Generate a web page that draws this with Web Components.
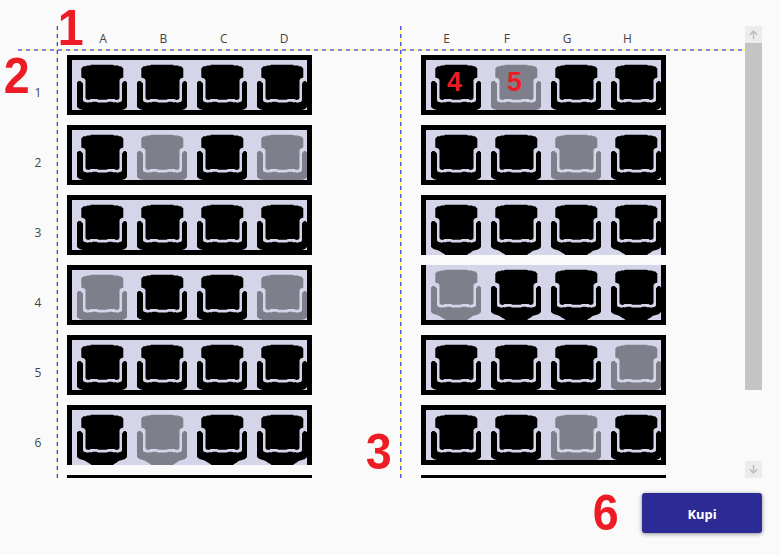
<!DOCTYPE html>
<html lang="hr">
<head>
<meta charset="utf-8">
<title>Odabir sjedala</title>
<style>
html,body{margin:0;background:#fafafa}
body{width:780px;height:555px;overflow:hidden;font-family:"Open Sans","Noto Sans",sans-serif}
</style>
</head>
<body>
<seat-picker></seat-picker>
<script>
const define = (name, html, setup) => {
  const t = document.createElement('template');
  t.innerHTML = html;
  customElements.define(name, class extends HTMLElement {
    connectedCallback() {
      if (this.shadowRoot) return;
      this.attachShadow({mode: 'open'}).appendChild(t.content.cloneNode(true));
      if (setup) setup(this);
    }
  });
};

define('theatre-seat', `<style>
:host{display:block;flex:none;width:60px;height:60px;position:relative}
svg{display:block}
:host([taken]) svg{opacity:.4}
slot{position:absolute;left:0;top:5px;width:57px;display:block;text-align:center;color:#ed1c24;font:bold 28px/34px "Liberation Sans",sans-serif;transform:scaleX(.95)}
</style>
<svg width="60" height="60" viewBox="0 0 60 60">
<path d="M19 4.7H41L42 5.5H46L47 6.3H49L51.3 8.5V17.5L48.7 18.5L47.5 20V38L46.5 39.5L44 40L42.5 39H36L34.5 39.8H26.5L25 39H18.5L17 40L14.5 39.5L13.5 38V20L12.3 18.5L9.3 17.5V8.5L11.5 6.3H14L15 5.5H18Z"/>
<path d="M5 22.5L6.5 21H8.5L11 23.5V40.5L12 41.8L16 42.8L17.5 42L19 42.6L21 41.8H24.5L26 42.5H35L36.5 41.8H40L42 42.6L43.5 42L45 42.8L49 41.8L50 40.5V23.5L52 21H53.5L55 22.5V47L53 49L50 50L46.5 51L44.5 52.8L42.5 53.8L41 55H19.5L18 53.8L16 52.8L13.5 51L11 50L7.5 49L5 47Z"/>
</svg><slot></slot>`);

define('seat-row', `<style>
:host{display:flex;box-sizing:border-box;width:245px;height:60px;border:5px solid #000;background:#d5d5ea;overflow:hidden;margin-bottom:10px}
:host([open-bottom]){border-bottom:0}
:host([open-top]){border-top:0}
</style><slot></slot>`);

define('seat-block', `<style>
:host{display:block;width:245px}
header{display:flex;height:29px;font-size:12px;line-height:26px;color:#444;margin-left:var(--inset,6px)}
header span{width:60.3px;flex:none;text-align:center}
</style><header></header><slot></slot>`, el => {
  const h = el.shadowRoot.querySelector('header');
  for (const c of el.getAttribute('letters')) {
    const s = document.createElement('span');
    s.textContent = c;
    h.appendChild(s);
  }
});

define('row-numbers', `<style>
:host{display:block;width:40px;padding-top:29px;font-size:12px;color:#444}
div{height:70px;line-height:76px;text-align:center}
</style>` + [1,2,3,4,5,6].map(n => `<div>${n}</div>`).join(''));

define('scroll-bar', `<style>
:host{display:flex;flex-direction:column;width:17px;height:452px}
span{height:17px;background:#ececec}
i{height:347px;background:#c4c4c4}
b{flex:1}
svg{display:block}
</style>
<span><svg width="17" height="17" fill="none" stroke="#bcbcbc" stroke-width="1.4"><path d="M8.5 13V5M4.7 9L8.5 5.2L12.3 9"/></svg></span><i></i><b></b>
<span><svg width="17" height="17" fill="none" stroke="#bcbcbc" stroke-width="1.4"><path d="M8.5 4V12M4.7 8.2L8.5 12L12.3 8.2"/></svg></span>`);

define('buy-button', `<style>
:host{display:block}
button{display:block;width:120px;height:40px;border:0;border-radius:3px;background:#2c2a94;color:#fff;font:bold 13px "Noto Sans",sans-serif;box-shadow:0 1px 4px rgba(0,0,0,.45);padding:2px 0 0}
</style><button><slot></slot></button>`);

define('note-mark', `<style>
:host{position:absolute;color:#ed1c24;font:bold 49px/48px "Liberation Sans",sans-serif;transform:scale(.95,1.03)}
</style><slot></slot>`);

define('guide-line', `<style>
:host{position:absolute;display:block}
:host([v]){width:2px;background:linear-gradient(90deg,rgba(250,250,250,var(--fl,0)) 0 1px,rgba(250,250,250,var(--fr,0)) 1px),repeating-linear-gradient(180deg,#3c3cf4 0 4px,#ffff5c 4px 8px)}
:host([h]){height:2px;background:repeating-linear-gradient(90deg,#8080ff 0 4px,#ffff80 4px 8px)}
</style>`);

define('seat-picker', `<style>
:host{display:block;position:relative;width:780px;height:555px}
main{display:flex;height:452px;padding:26px 18px 0;overflow:hidden}
.hall{display:flex;height:452px;width:727px;overflow:hidden}
.l{margin-left:9px}
.r{margin-left:109px;--inset:-4.7px}
footer{display:flex;justify-content:flex-end;padding:15px 18px 0}
</style>
<main><div class="hall"><row-numbers></row-numbers><seat-block class="l" letters="ABCD"></seat-block><seat-block class="r" letters="EFGH"></seat-block></div><scroll-bar></scroll-bar></main>
<footer><buy-button>Kupi</buy-button></footer>
<guide-line h style="left:18px;top:49px;width:727px"></guide-line>
<guide-line v style="left:56px;top:26px;height:452px;--fl:.7"></guide-line>
<guide-line v style="left:400px;top:26px;height:452px;--fl:.15;--fr:.55"></guide-line>
<note-mark style="left:57px;top:3px">1</note-mark>
<note-mark style="left:3px;top:51px">2</note-mark>
<note-mark style="left:365px;top:427px">3</note-mark>
<note-mark style="left:592px;top:488px">6</note-mark>`, el => {
  const blocks = {
    '.l': [['oooo'],['oxox'],['oooo'],['xoox'],['oooo'],['oxoo','open-bottom'],['oooo']],
    '.r': [['oxoo'],['ooxo'],['oooo','open-bottom'],['xooo','open-top'],['ooox'],['ooxo'],['oooo']]
  };
  for (const [sel, rows] of Object.entries(blocks)) {
    const block = el.shadowRoot.querySelector(sel);
    rows.forEach(([seats, edge], r) => {
      const row = document.createElement('seat-row');
      if (edge) row.setAttribute(edge, '');
      [...seats].forEach((s, i) => {
        const seat = document.createElement('theatre-seat');
        if (s === 'x') seat.setAttribute('taken', '');
        if (sel === '.r' && r === 0 && i < 2) seat.textContent = i ? '5' : '4';
        row.appendChild(seat);
      });
      block.appendChild(row);
    });
  }
});
</script>
</body>
</html>
